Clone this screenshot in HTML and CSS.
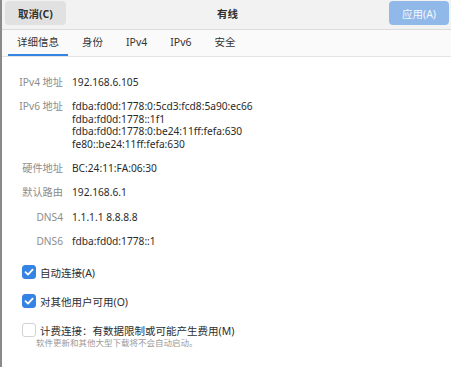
FILE: index.html
```html
<!DOCTYPE html>
<html>
<head>
<meta charset="utf-8">
<link rel="stylesheet" href="styles.css">
</head>
<body>
<div class="window">
  <header class="header">
    <button class="btn btn-cancel">取消(C)</button>
    <div class="title">有线</div>
    <button class="btn btn-apply">应用(A)</button>
  </header>
  <nav class="tabs">
    <div class="tab active">详细信息</div>
    <div class="tab">身份</div>
    <div class="tab">IPv4</div>
    <div class="tab">IPv6</div>
    <div class="tab">安全</div>
  </nav>
  <main class="content">
    <div class="grid">
      <div class="label">IPv4 地址</div>
      <div class="value">192.168.6.105</div>
      <div class="label">IPv6 地址</div>
      <div class="value">fdba:fd0d:1778:0:5cd3:fcd8:5a90:ec66<br>fdba:fd0d:1778::1f1<br>fdba:fd0d:1778:0:be24:11ff:fefa:630<br>fe80::be24:11ff:fefa:630</div>
      <div class="label">硬件地址</div>
      <div class="value">BC:24:11:FA:06:30</div>
      <div class="label">默认路由</div>
      <div class="value">192.168.6.1</div>
      <div class="label">DNS4</div>
      <div class="value">1.1.1.1 8.8.8.8</div>
      <div class="label">DNS6</div>
      <div class="value">fdba:fd0d:1778::1</div>
    </div>
    <div class="checks">
      <label class="check"><span class="box on"><svg viewBox="0 0 14 14" width="14" height="14"><path d="M3.5 7.2 L6 9.6 L10.6 4.6" fill="none" stroke="#fff" stroke-width="1.8" stroke-linecap="round" stroke-linejoin="round"/></svg></span><span class="ctext">自动连接(A)</span></label>
      <label class="check"><span class="box on"><svg viewBox="0 0 14 14" width="14" height="14"><path d="M3.5 7.2 L6 9.6 L10.6 4.6" fill="none" stroke="#fff" stroke-width="1.8" stroke-linecap="round" stroke-linejoin="round"/></svg></span><span class="ctext">对其他用户可用(O)</span></label>
      <div class="check-block">
        <label class="check"><span class="box"></span><span class="ctext">计费连接：有数据限制或可能产生费用(M)</span></label>
        <div class="hint">软件更新和其他大型下载将不会自动启动。</div>
      </div>
    </div>
  </main>
</div>
</body>
</html>
```
FILE: styles.css
```css
html, body {
  margin: 0;
  padding: 0;
  background: #fff;
}
body {
  font-family: "Noto Sans", "Noto Sans CJK SC", sans-serif;
  font-size: 10.5px;
  color: #2e2e2e;
  width: 451px;
  height: 367px;
  overflow: hidden;
}
.window {
  border-left: 2px solid #8a8a8a;
  height: 367px;
  box-sizing: border-box;
  display: flex;
  flex-direction: column;
}
.header {
  height: 30px;
  background: #f2f2f2;
  border-bottom: 1px solid #dcdcdc;
  box-sizing: border-box;
  display: flex;
  align-items: flex-start;
  justify-content: space-between;
  padding: 1px 2px 0 3px;
}
.btn {
  font-family: inherit;
  font-size: 10.5px;
  font-weight: bold;
  border: none;
  border-radius: 4px;
  height: 24px;
  padding: 0;
  width: 61px;
}
.btn-cancel {
  background: #e1e1e1;
  color: #303030;
}
.btn-apply {
  background: #90b9e9;
  color: #f4f8fd;
  font-weight: normal;
  width: 60px;
}
.title {
  font-weight: bold;
  font-size: 10.5px;
  line-height: 26px;
  color: #303030;
}
.tabs {
  display: flex;
  gap: 5px;
  height: 27px;
  border-bottom: 1px solid #e4e4e4;
  box-sizing: border-box;
  padding-left: 6px;
  background: #fafafa;
}
.tab {
  padding: 0 9px;
  line-height: 24px;
  font-size: 10.5px;
  color: #333;
  border-bottom: 2px solid transparent;
}
.tab.active {
  border-bottom-color: #3584e4;
}
.content {
  padding: 19px 0 0 0;
  flex: 1;
}
.grid {
  display: grid;
  grid-template-columns: 61px auto;
  column-gap: 9px;
  row-gap: 12px;
  font-size: 10.2px;
  line-height: 12.4px;
}
.label {
  text-align: right;
  color: #8c8c8c;
}
.value {
  color: #2a2a2a;
}
.checks {
  margin-top: 17px;
  padding-left: 20px;
  display: flex;
  flex-direction: column;
  gap: 14px;
}
.check {
  display: flex;
  align-items: center;
  gap: 4px;
  font-size: 10.5px;
}
.box {
  width: 14px;
  height: 14px;
  box-sizing: border-box;
  border-radius: 3px;
  border: 1px solid #d2d2d2;
  background: #fff;
  display: flex;
}
.box.on {
  background: #3584e4;
  border-color: #3584e4;
}
.box svg { margin: -1px; }
.hint {
  font-size: 8.5px;
  color: #9a9a9a;
  margin-left: 14px;
  margin-top: -2px;
}
```
